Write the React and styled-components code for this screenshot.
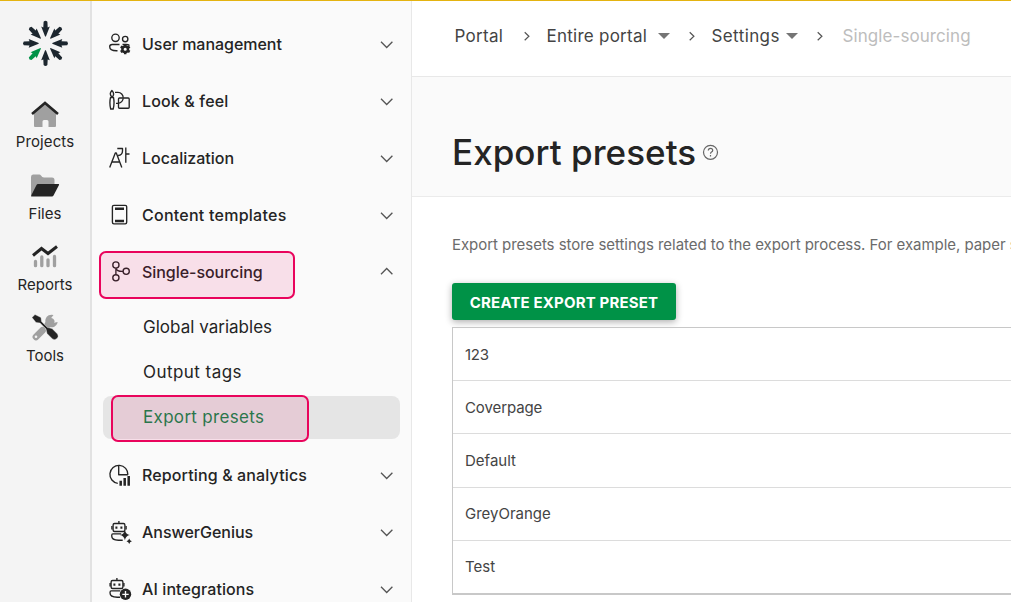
import React from "react";
import styled, { createGlobalStyle } from "styled-components";

const GlobalStyle = createGlobalStyle`
  *, *::before, *::after { box-sizing: border-box; }
  body { margin: 0; font-family: Inter, "Liberation Sans", sans-serif; color: #242424; background: #fff; overflow: hidden; }
`;

const Page = styled.div`
  display: flex;
  width: 100%;
  height: 602px;
  overflow: hidden;
  border-top: 1px solid #e4b310;
`;

const Rail = styled.nav`
  display: flex;
  flex-direction: column;
  align-items: center;
  flex: none;
  width: 92px;
  padding-top: 18px;
  background: #f4f4f4;
  border-right: 2px solid #e2e2e2;
`;

const LogoBox = styled.div`
  height: 78px;
  svg { display: block; }
`;

const RailItem = styled.a`
  display: flex;
  flex-direction: column;
  align-items: center;
  height: ${(p) => p.$height || 71}px;
  font-size: 15px;
  line-height: 20px;
  letter-spacing: ${(p) => p.$tracking || 0}px;
  svg { display: block; margin-bottom: 3px; }
`;

const Sidebar = styled.aside`
  flex: none;
  width: 320px;
  padding-top: 15px;
  background: #fafafa;
  border-right: 1px solid #e8e8e8;
`;

const Row = styled.div`
  position: relative;
  display: flex;
  align-items: center;
  height: 57px;
  padding: 0 16px 1px;
  svg { flex: none; display: block; }
`;

const RowLabel = styled.span`
  flex: 1;
  margin-left: 10px;
  font-size: 16px;
  font-weight: 470;
  line-height: 20px;
  letter-spacing: ${(p) => p.$tracking || 0}px;
  white-space: nowrap;
`;

const SubMenu = styled.div`
  padding: 4px 11px 6px;
`;

const SubItem = styled.a`
  position: relative;
  display: flex;
  align-items: center;
  height: 43px;
  margin: 1px 0 2px;
  padding-left: 40px;
  padding-bottom: 1px;
  border-radius: 8px;
  font-size: 17px;
  letter-spacing: ${(p) => p.$tracking || 0}px;
  color: ${(p) => (p.$active ? "#12854a" : "#242424")};
  background: ${(p) => (p.$active ? "#e5e5e5" : "transparent")};
`;

const Marker = styled.span`
  position: absolute;
  left: ${(p) => p.$left}px;
  top: ${(p) => p.$top}px;
  width: ${(p) => p.$width}px;
  height: ${(p) => p.$height}px;
  border: 2px solid #e9045c;
  border-radius: 7px;
  background: rgba(233, 4, 92, 0.105);
`;

const Main = styled.main`
  flex: 1;
  min-width: 0;
  overflow: hidden;
`;

const Breadcrumbs = styled.div`
  display: flex;
  align-items: center;
  height: 76px;
  padding: 0 0 6px 42.5px;
  border-bottom: 1px solid #e8e8e8;
  font-size: 17px;
  white-space: nowrap;
  color: #444;
  svg { display: block; flex: none; }
`;

const Crumb = styled.span`
  flex: none;
  width: ${(p) => p.$width}px;
  letter-spacing: ${(p) => p.$tracking || 0}px;
  color: ${(p) => (p.$muted ? "#bdbdbd" : "#444")};
`;

const CrumbGap = styled.span`
  flex: none;
  width: ${(p) => p.$width}px;
  padding-left: ${(p) => p.$inset}px;
`;

const TitleBand = styled.header`
  display: flex;
  align-items: center;
  height: 120px;
  padding: 32px 0 0 40px;
  background: #fafafa;
  border-bottom: 1px solid #ebebeb;
`;

const Title = styled.h1`
  width: 250px;
  margin: 0 0 1px;
  font-size: 35px;
  font-weight: 450;
  line-height: 44px;
  letter-spacing: 0.04px;
  white-space: nowrap;
  color: #242424;
`;

const Content = styled.section`
  padding: 38px 0 0 40px;
`;

const Intro = styled.p`
  margin: 0;
  height: 48px;
  font-size: 15px;
  line-height: 20px;
  letter-spacing: -0.042px;
  white-space: nowrap;
  color: #6b6b6b;
`;

const CreateButton = styled.button`
  display: block;
  width: 224px;
  height: 37px;
  padding: 2px 0 0;
  border: 0;
  border-radius: 3px;
  background: #009247;
  box-shadow: 0 2px 7px rgba(0, 0, 0, 0.32);
  color: #fff;
  font-family: inherit;
  font-size: 15px;
  font-weight: 700;
  letter-spacing: 0.16px;
  white-space: nowrap;
`;

const Table = styled.div`
  width: 620px;
  margin-top: 7px;
  border: 1px solid #c8c8c8;
  border-bottom-width: 2px;
`;

const TableRow = styled.div`
  display: flex;
  align-items: center;
  height: 53.25px;
  padding: 0 0 0 12px;
  font-size: 15px;
  color: #444;
  letter-spacing: ${(p) => p.$tracking || 0}px;
  & + & { border-top: 1px solid #dcdcdc; }
  &:first-child { height: 52px; }
`;

const ARROW = "M-1.9 -21.7 Q0 -23.4 1.9 -21.7 L2.2 -16 L4.3 -16.8 L.4 -6.8 H-.4 L-4.3 -16.8 L-2.2 -16Z";

function Logo() {
  return (
    <svg width="48" height="48" viewBox="-24.5 -24.4 48 48">
      {[0, 45, 90, 135, 180, 225, 270, 315].map((a) => (
        <path key={a} d={ARROW} transform={`rotate(${a})`} fill={a === 225 ? "#009247" : "#1c262e"} />
      ))}
    </svg>
  );
}

function Projects() {
  return (
    <svg width="30" height="32" viewBox="0 0 30 32">
      <path d="M4 14 15 5 26 14V29Q26 30 25 30H18.5V24.5Q18.5 23 17 23H14Q12.500 23 12.500 24.500V30H5Q4 30 4 29Z" fill="#a0a0a0" />
      <path d="M2 17 15 6 28 17" fill="none" stroke="#242424" strokeWidth="2.6" />
    </svg>
  );
}

function Files() {
  return (
    <svg width="30" height="32" viewBox="0 0 30 32">
      <path d="M1 27V8Q1 5.500 3 5.500H9Q10 5.200 11 6.500 12 8.500 14 8.500H22Q24.500 8.500 24.500 11V16H10Z" fill="#a0a0a0" />
      <path d="M8 15H28.500Q29.500 15 29 16L23.500 26.500Q23 27.500 22 27.500H1.500Q.8 27.500 1.200 26.500L6.500 16Q7 15 8 15Z" fill="#242424" />
    </svg>
  );
}

function Reports() {
  return (
    <svg width="30" height="32" viewBox="0 0 30 32">
      <path d="M5.500 21.500V25.700M11.800 17V25.700M18 19.800V25.700M24.500 16.500V25.700" stroke="#a0a0a0" strokeWidth="3.3" strokeLinecap="round" />
      <path d="M3 15.500 11.500 8.500 18 13.500 27 6.500" fill="none" stroke="#242424" strokeWidth="3" />
    </svg>
  );
}

function Tools() {
  return (
    <svg width="30" height="32" viewBox="0 0 30 32">
      <path d="M6 25.800 12.500 19.300M18 13.500 21 10.500" stroke="#a0a0a0" strokeWidth="6.8" strokeLinecap="round" />
      <path d="M23.500 4A6.300 6.300 0 1 0 27.500 12L27.500 11 23 12 19.800 8.800Z" fill="#a0a0a0" />
      <circle cx="6" cy="25.800" r="1.3" fill="#f4f4f4" />
      <path d="M2 6.500 5 3.500 11 6.500 11.500 10.500 17.500 16.500 22 17.500 27.500 23Q29 25.500 27 27.500 25 29.500 22.500 28L17 22.500 16 18 10 12 6 11.500Z" fill="#242424" stroke="#f4f4f4" strokeWidth=".4" />
    </svg>
  );
}

const Glyph = styled.svg.attrs({ width: 24, height: 24, viewBox: "0 0 24 24" })`
  fill: none;
  stroke: #242424;
  stroke-width: 1.35;
  stroke-linejoin: round;
  .solid { fill: #242424; stroke: none; }
  .bold { stroke-width: 2.5; }
  .light { stroke: #fafafa; }
`;

const icons = {
  users: (
    <Glyph>
      <circle cx="7.5" cy="5.8" r="3.7" /><circle cx="17.2" cy="7" r="2.7" />
      <path d="M11.500 12.500H4.200Q1.700 12.500 1.700 14.700 1.700 18.700 8.500 18.700H9.500M14.500 12.500H18Q20.500 12.500 21.500 13.500" />
      <circle className="bold" cx="17.2" cy="17.3" r="2.8" />
      <path className="bold" d="M17.200 12.300V14.500M17.200 20V22.300M12.700 14.700 14.500 15.700M20 18.900 21.700 19.900M12.700 19.900 14.500 18.900M20 15.700 21.700 14.700" />
    </Glyph>
  ),
  look: (
    <Glyph>
      <path d="M3.700 7.700Q.8 4.800 3.900 1.500 7 4.800 4.500 7.700ZM2.500 8.500H5.500Q6.700 14 5.200 20H2.700Q1.200 14 2.500 8.500Z" />
      <path d="M7 3.300H10A5.300 5.300 0 0 1 15.200 8.700M8 14.300H10Q14.800 13.300 15.200 9.200" />
      <rect x="10.5" y="9" width="10.7" height="10.2" rx="1" />
    </Glyph>
  ),
  locale: (
    <Glyph>
      <path d="M1.700 21.400 7.300 7H8.300L13.800 21.400M3.800 16H11.800M9.300 2.500H14.500V5Q14.500 9 10.100 9.500M17.800 1.500V16.700M17.800 8H21.500" />
    </Glyph>
  ),
  template: (
    <Glyph>
      <rect x="4.4" y="2.3" width="14.3" height="18.5" rx="1.5" />
      <path className="bold" d="M7 5.700H16M7 18H16" />
    </Glyph>
  ),
  source: (
    <Glyph>
      <circle cx="7.9" cy="5" r="3.1" /><circle cx="7.9" cy="17.8" r="3.1" /><circle cx="18.2" cy="11.3" r="3.1" />
      <path d="M7.900 8.200V14.700M7.900 8.200Q8.800 11.500 15 11.300" />
    </Glyph>
  ),
  analytics: (
    <Glyph>
      <path d="M9.800 20.300A9 9 0 1 1 19.900 11.800M10.700 2.300V11.700H19.900" />
      <path className="bold" d="M12.700 17.800V22.700M16.700 15V22.700M20.700 12.900V22.700" />
    </Glyph>
  ),
  genius: (
    <Glyph>
      <path d="M10.900 1V3.500M3.900 6V9.400M18.100 6V9.400" />
      <rect x="5.1" y="3.5" width="11.8" height="8" rx="1.5" />
      <path d="M13.200 13.900H4.900Q3.700 13.900 3.700 15.700 3.700 20.200 10.400 20.200H14.700" />
      <path className="solid" d="M7.400 6.400H9.400V8.700H7.400ZM12.400 6.400H14.400V8.700H12.400ZM16.900 9.900Q17.700 14.200 21.900 15.100 17.700 15.900 16.900 20.200 16.100 15.900 11.900 15.100 16.100 14.200 16.900 9.900ZM21.200 18.500Q21.700 20.800 23.900 21.300 21.700 21.800 21.200 23.900 20.700 21.800 18.500 21.300 20.700 20.800 21.200 18.500Z" />
    </Glyph>
  ),
  ai: (
    <Glyph>
      <path d="M8.900 1V3.500M2.100 6V9.400M15.900 6V9.400" />
      <rect x="3.1" y="3.5" width="11.8" height="8" rx="1.5" />
      <path d="M12.200 13.900H3.200Q2 13.900 2 15.700 2 20.200 9.200 20.200H12.200" />
      <circle className="solid" cx="17.5" cy="17.3" r="5.7" />
      <path className="light" d="M17.500 14.100V20.500M14.300 17.300H20.700" />
      <path className="solid" d="M5.400 6.400H7.400V8.700H5.400ZM10.400 6.400H12.400V8.700H10.400Z" />
    </Glyph>
  ),
};

function Chevron({ up }) {
  return (
    <svg width="16" height="16" viewBox="0 0 16 16" fill="none" stroke="#555" strokeWidth="1.3">
      <path d={up ? "M2 10.200 7.700 4.500 13.400 10.200" : "M2 5.800 7.700 11.500 13.400 5.800"} />
    </svg>
  );
}

function MenuRow({ icon, label, tracking, open, children }) {
  return (
    <Row>
      {icons[icon]}
      <RowLabel $tracking={tracking}>{label}</RowLabel>
      <Chevron up={open} />
      {children}
    </Row>
  );
}

function Separator({ width }) {
  return (
    <CrumbGap $width={width} $inset={0}>
      <svg width="8" height="10" viewBox="0 0 8 10" fill="none" stroke="#555" strokeWidth="1.2">
        <path d="M.7 1.300 4.900 5.300 .7 9.300" />
      </svg>
    </CrumbGap>
  );
}

function Caret({ width, inset }) {
  return (
    <CrumbGap $width={width} $inset={inset}>
      <svg width="12" height="6" viewBox="0 0 12 6"><path d="M0 0H12L6 6Z" fill="#757575" /></svg>
    </CrumbGap>
  );
}

function HelpIcon() {
  return (
    <svg width="17" height="17" viewBox="0 0 17 17" fill="none" stroke="#666" strokeWidth="1.2">
      <circle cx="8.5" cy="8.3" r="7" />
      <path d="M6.300 6.600Q6.300 4.400 8.500 4.400 10.700 4.400 10.700 6.400 10.700 7.400 9.500 8.100 8.500 8.700 8.500 9.800M8.500 11V12.500" />
    </svg>
  );
}

const presets = [
  { name: "123", tracking: -0.3 },
  { name: "Coverpage", tracking: -0.1 },
  { name: "Default" },
  { name: "GreyOrange" },
  { name: "Test" },
];

export default function App() {
  return (
    <>
      <GlobalStyle />
      <Page>
        <Rail>
          <LogoBox><Logo /></LogoBox>
          <RailItem $height={72} $tracking={0.1}><Projects />Projects</RailItem>
          <RailItem><Files />Files</RailItem>
          <RailItem><Reports />Reports</RailItem>
          <RailItem><Tools />Tools</RailItem>
        </Rail>
        <Sidebar>
          <MenuRow icon="users" label="User management" tracking={-0.03} />
          <MenuRow icon="look" label="Look & feel" tracking={0.15} />
          <MenuRow icon="locale" label="Localization" />
          <MenuRow icon="template" label="Content templates" tracking={0.25} />
          <MenuRow icon="source" label="Single-sourcing" tracking={-0.05} open>
            <Marker $left={7.4} $top={7} $width={196} $height={48} />
          </MenuRow>
          <SubMenu>
            <SubItem $tracking={0.02}>Global variables</SubItem>
            <SubItem $tracking={0.45}>Output tags</SubItem>
            <SubItem $active $tracking={0.32}>
              Export presets
              <Marker $left={8.4} $top={-1} $width={198} $height={47} />
            </SubItem>
          </SubMenu>
          <MenuRow icon="analytics" label="Reporting & analytics" tracking={0.13} />
          <MenuRow icon="genius" label="AnswerGenius" tracking={-0.03} />
          <MenuRow icon="ai" label="AI integrations" tracking={0.1} />
        </Sidebar>
        <Main>
          <Breadcrumbs>
            <Crumb $width={69} $tracking={0.28}>Portal</Crumb>
            <Separator width={23} />
            <Crumb $width={102} $tracking={0.25}>Entire portal</Crumb>
            <Caret width={40} inset={9.4} />
            <Separator width={23} />
            <Crumb $width={69} $tracking={0.4}>Settings</Crumb>
            <Caret width={36} inset={5.5} />
            <Separator width={26} />
            <Crumb $width={130} $tracking={0.08} $muted>Single-sourcing</Crumb>
          </Breadcrumbs>
          <TitleBand>
            <Title>Export presets</Title>
            <HelpIcon />
          </TitleBand>
          <Content>
            <Intro>Export presets store settings related to the export process. For example, paper size, margins</Intro>
            <CreateButton>CREATE EXPORT PRESET</CreateButton>
            <Table>
              {presets.map(({ name, tracking }) => (
                <TableRow key={name} $tracking={tracking}>{name}</TableRow>
              ))}
            </Table>
          </Content>
        </Main>
      </Page>
    </>
  );
}
